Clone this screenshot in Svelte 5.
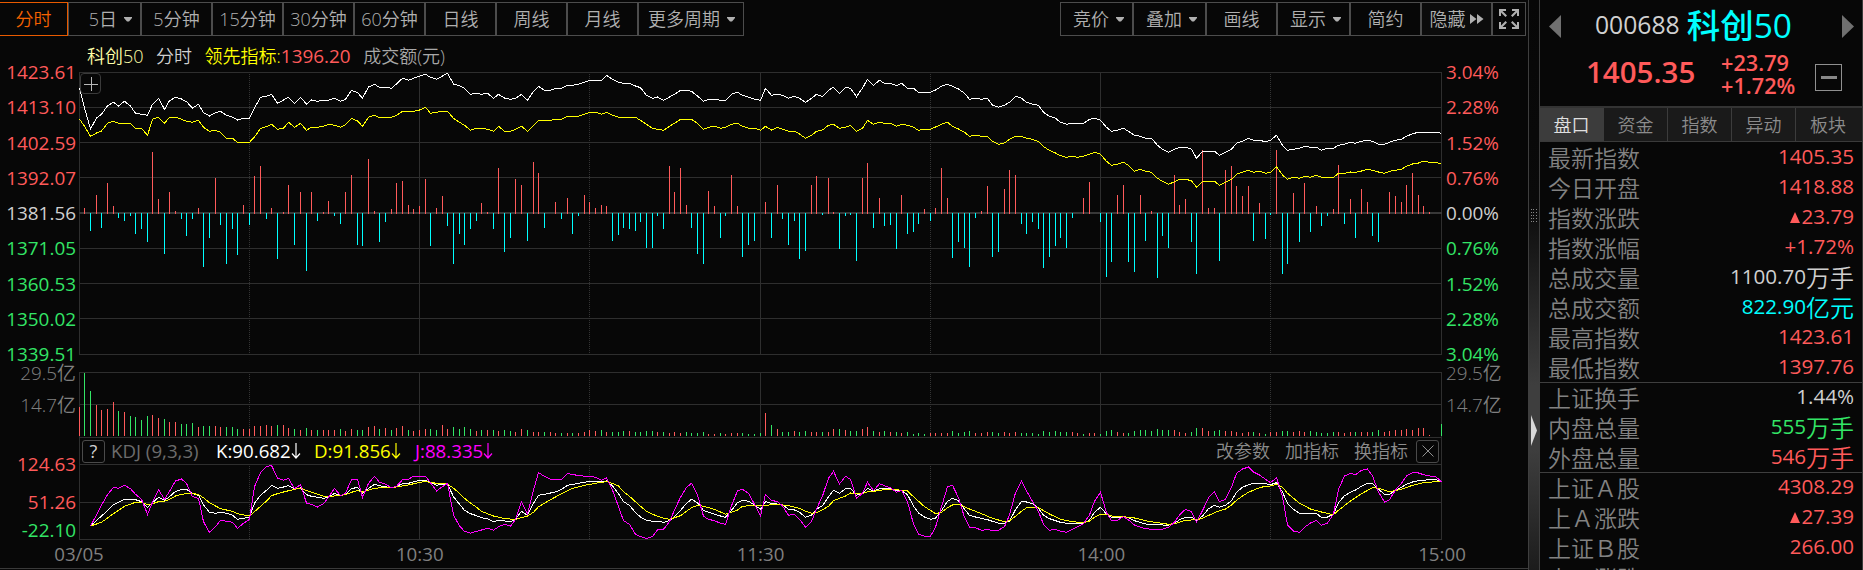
<script lang="ts">
  type Tool = { label: string; width: number; caret?: boolean; active?: boolean; icon?: string };
  type Row = { label: string; num: string; unit?: string; tone: string; up?: boolean; last?: boolean };

  const periods: Tool[] = [
    { label: "分时", width: 68, active: true },
    { label: "5日", width: 73, caret: true },
    { label: "5分钟", width: 71 },
    { label: "15分钟", width: 71 },
    { label: "30分钟", width: 71 },
    { label: "60分钟", width: 71 },
    { label: "日线", width: 71 },
    { label: "周线", width: 71 },
    { label: "月线", width: 71 },
    { label: "更多周期", width: 106, caret: true }
  ];

  const tools: Tool[] = [
    { label: "竞价", width: 73, caret: true },
    { label: "叠加", width: 73, caret: true },
    { label: "画线", width: 71 },
    { label: "显示", width: 73, caret: true },
    { label: "简约", width: 71 },
    { label: "隐藏", width: 71, icon: "forward" },
    { label: "", width: 34, icon: "expand" }
  ];

  const prices = ["1423.61", "1413.10", "1402.59", "1392.07", "1381.56", "1371.05", "1360.53", "1350.02", "1339.51"];
  const percents = ["3.04%", "2.28%", "1.52%", "0.76%", "0.00%", "0.76%", "1.52%", "2.28%", "3.04%"];
  const times = ["03/05", "10:30", "11:30", "14:00", "15:00"];
  const tabs = ["盘口", "资金", "指数", "异动", "板块"];

  const rows: Row[] = [
    { label: "最新指数", num: "1405.35", tone: "red" },
    { label: "今日开盘", num: "1418.88", tone: "red" },
    { label: "指数涨跌", num: "23.79", tone: "red", up: true },
    { label: "指数涨幅", num: "+1.72%", tone: "red" },
    { label: "总成交量", num: "1100.70", unit: "万手", tone: "light" },
    { label: "总成交额", num: "822.90", unit: "亿元", tone: "cyan" },
    { label: "最高指数", num: "1423.61", tone: "red" },
    { label: "最低指数", num: "1397.76", tone: "red", last: true },
    { label: "上证换手", num: "1.44%", tone: "light" },
    { label: "内盘总量", num: "555", unit: "万手", tone: "green" },
    { label: "外盘总量", num: "546", unit: "万手", tone: "red", last: true },
    { label: "上证Ａ股", num: "4308.29", tone: "red" },
    { label: "上Ａ涨跌", num: "27.39", tone: "red", up: true },
    { label: "上证Ｂ股", num: "266.00", tone: "red" },
    { label: "上Ｂ涨跌", num: "0.00", tone: "red" }
  ];

  // one sample per trading minute, levels in thirds of a pixel
  const price = [
    264, 324, 387, 354, 343, 317, 307, 318, 304, 318, 340, 343, 346, 313, 295, 328, 302, 292, 297, 305,
    324, 313, 338, 348, 338, 334, 346, 352, 360, 355, 355, 324, 292, 289, 283, 310, 300, 292, 310, 292,
    312, 300, 304, 301, 301, 295, 304, 298, 271, 278, 294, 261, 253, 262, 262, 265, 252, 235, 241, 235,
    229, 223, 232, 238, 228, 220, 252, 257, 265, 283, 280, 283, 280, 295, 283, 294, 298, 295, 283, 301,
    274, 259, 271, 271, 265, 265, 256, 256, 253, 247, 241, 241, 241, 226, 238, 247, 250, 250, 258, 263,
    286, 295, 291, 301, 291, 283, 271, 271, 274, 288, 304, 298, 298, 301, 301, 283, 277, 286, 292, 298,
    301, 265, 286, 283, 286, 295, 289, 295, 307, 295, 283, 290, 271, 262, 280, 262, 265, 290, 264, 238,
    256, 241, 250, 250, 257, 250, 265, 265, 277, 277, 277, 270, 259, 253, 259, 267, 280, 298, 295, 298,
    295, 316, 322, 316, 307, 289, 295, 307, 313, 316, 337, 349, 355, 367, 373, 370, 370, 370, 358, 355,
    361, 382, 394, 391, 385, 394, 406, 409, 415, 415, 436, 448, 457, 448, 442, 442, 448, 475, 454, 454,
    454, 466, 457, 448, 430, 424, 415, 421, 421, 425, 421, 406, 436, 451, 448, 445, 439, 442, 442, 451,
    445, 445, 436, 433, 427, 430, 424, 421, 424, 433, 433, 427, 421, 418, 409, 401, 397, 397, 397, 397, 400
  ];

  const leading = [
    357, 379, 409, 399, 393, 370, 364, 370, 370, 370, 385, 385, 406, 358, 352, 370, 352, 352, 358, 364,
    367, 361, 382, 394, 391, 397, 415, 415, 427, 427, 427, 411, 385, 380, 373, 388, 385, 367, 382, 370,
    391, 382, 382, 379, 373, 376, 382, 374, 355, 363, 379, 352, 346, 354, 352, 352, 346, 334, 334, 334,
    330, 322, 340, 337, 334, 334, 355, 367, 376, 391, 385, 385, 388, 394, 379, 394, 394, 388, 379, 394,
    376, 361, 361, 361, 358, 358, 349, 349, 349, 343, 337, 337, 343, 337, 346, 352, 352, 352, 352, 361,
    373, 385, 388, 391, 379, 370, 358, 358, 358, 370, 388, 382, 379, 385, 382, 373, 370, 379, 385, 385,
    391, 379, 390, 382, 388, 394, 394, 402, 415, 406, 394, 390, 376, 373, 385, 382, 376, 394, 385, 361,
    373, 367, 370, 370, 379, 373, 376, 382, 391, 388, 388, 381, 373, 367, 379, 387, 397, 409, 406, 409,
    409, 424, 433, 429, 418, 409, 409, 415, 418, 425, 440, 451, 459, 467, 472, 469, 472, 469, 463, 457,
    463, 484, 496, 493, 487, 496, 514, 508, 514, 517, 535, 544, 553, 545, 538, 538, 542, 562, 544, 544,
    544, 556, 547, 538, 523, 517, 511, 517, 514, 520, 517, 500, 525, 538, 532, 535, 529, 532, 526, 532,
    532, 532, 520, 520, 516, 517, 513, 508, 511, 516, 520, 514, 511, 508, 499, 492, 489, 484, 487, 487, 493
  ];

  // bar lengths in pixels, negative values hang below the zero line
  const momentum = [
    0, 5, -18, 18, -15, 30, 7, -5, -8, -3, -21, -16, -29, 61, 14, -41, 21, 2, -6, -23,
    -6, 5, -54, -25, 35, -12, -51, -16, -42, 8, -12, 37, 47, -6, 5, -46, 1, 28, -32, 21,
    -58, 21, -8, 1, 12, -3, -11, 21, 38, -32, -33, 54, 2, -29, -9, 4, 30, 32, 8, 4,
    7, 34, -33, 5, 17, -13, -51, -21, -32, -16, -8, 10, 1, -16, 45, -39, -25, 34, 28, -28,
    51, 40, -15, 0, 11, -6, 15, -21, -3, 18, 11, 5, 8, 7, -28, -22, -15, -16, -18, -9,
    -35, -35, -3, -16, 47, 21, 45, 8, -15, -41, -51, 22, 7, -25, -3, 38, 7, -44, -32, -28,
    0, 11, -25, 28, -6, -32, -8, -46, -38, 28, 37, -2, 35, 1, -36, -3, -2, -48, 35, 50,
    -15, 15, -13, -12, -36, 18, -21, -19, -11, 4, -8, 5, 45, 15, -45, -29, -35, -54, -5, 2,
    27, -44, -39, 24, 43, 38, -11, -21, -9, -16, -55, -44, -33, -25, -35, -5, 0, 15, 31, 0,
    -9, -64, -49, 18, 28, -49, -59, 18, -28, 2, -65, -23, -35, 38, 8, 14, -29, -61, 63, 5,
    5, -48, 43, 47, 27, 17, 27, -28, 10, -26, -2, 63, -61, -51, 20, -29, 30, -19, 7, -13,
    -3, 4, 48, -11, 14, -25, 24, 11, -23, -29, 0, 21, 17, 11, 28, 40, 18, 7, 1, 0, 0
  ];

  // turnover in thirds of a pixel, the sign only picks the colour
  const turnover = [
    87, -189, -135, 93, 78, 81, 102, -75, 72, -60, -57, -48, -60, 63, 54, -51, 42, 42, -36, -36,
    -39, 27, -30, -30, 30, 27, -27, -27, -21, 21, 21, 30, 30, 33, 30, -33, 33, 24, -21, 18,
    -24, 18, -18, 18, 18, 18, -21, 15, 21, -18, -18, 27, 30, -21, 24, -18, 24, 30, -18, 15,
    18, 21, -21, -18, 33, 21, -27, -21, -27, -21, 15, -18, 18, -18, 15, -18, -15, 12, 21, -18,
    12, 12, -12, 12, 9, -9, 9, -9, 9, 12, 18, 15, -18, 12, -12, -12, -15, 15, -12, -12,
    -15, -15, 12, -12, 9, 12, 9, -12, -9, -9, -12, 6, 6, -9, 6, 9, 9, -9, -6, -6,
    -9, 69, -33, 21, -12, -12, 15, -12, -15, 12, 12, -12, 12, 21, -21, 18, -15, -15, 21, 27,
    -15, 12, -15, 12, -12, 9, -12, -6, -9, -6, 9, 9, 9, 9, -15, -9, -12, -15, 9, 9,
    12, -12, -9, 12, 9, 12, -9, -9, -9, -6, -15, -12, -15, -12, -12, 12, 9, -6, 9, 9,
    -6, -15, -18, 12, 9, -9, -15, -18, -18, -15, -21, -18, -18, 18, 12, 9, -12, -24, 24, 15,
    -15, -18, 15, 15, 12, 9, 12, -12, 9, -6, 12, 12, -15, -15, 12, 15, 12, -15, -12, -9,
    -9, -12, 12, 9, 12, -12, 12, 12, -12, -18, 12, 15, 18, 18, 21, 18, 24, 24, 3, 0, -36
  ];

  const kLine =
    "2,558 4,528 5,512 6,494 8,478 10,479 11,485 12,503 13,488 14,472 15,481 16,470 17,454 18,449 19,448 20,461 21,466 22,495 23,517 24,520 25,517 26,520 27,526 28,538 29,535 30,531 31,490 32,466 33,451 34,436 35,445 36,441 37,437 38,447 39,444 40,464 41,469 43,475 44,472 45,460 46,467 47,463 48,446 49,442 50,461 51,445 52,433 53,437 55,443 56,439 57,431 58,430 60,421 61,422 62,427 63,436 64,433 65,432 66,470 67,493 68,511 69,521 70,527 71,533 72,536 73,545 74,541 76,545 77,538 78,514 79,526 80,490 81,466 82,463 83,459 84,456 85,448 86,436 88,430 90,424 92,425 93,423 94,437 95,461 96,485 97,496 98,518 99,531 100,541 101,544 102,544 103,547 104,542 105,530 106,511 107,490 108,478 109,488 110,511 111,517 112,523 113,528 114,532 115,511 116,488 117,481 118,484 119,495 120,508 121,485 122,490 124,494 125,508 126,510 127,517 128,532 129,526 130,508 131,497 132,470 133,451 134,460 135,446 136,445 137,466 138,460 139,445 140,453 141,446 143,446 144,452 145,452 146,464 147,498 148,519 149,531 150,538 151,534 152,512 153,484 154,475 155,482 156,508 157,526 158,531 160,539 161,544 162,550 163,550 164,543 165,509 166,484 167,486 168,491 169,505 170,526 171,536 172,542 173,547 174,550 177,550 178,540 179,517 180,502 181,522 182,532 183,533 184,530 185,533 186,542 188,552 190,554 192,556 193,550 194,539 195,532 196,532 197,541 198,528 199,506 200,496 201,502 202,496 203,482 204,457 205,442 206,434 207,430 209,431 210,434 211,428 212,456 213,490 214,508 215,520 218,520 219,533 220,531 221,522 222,488 223,467 224,457 225,450 226,439 227,430 228,431 229,448 230,463 231,463 232,452 233,442 234,433 235,426 236,422 238,419 239,418 240,426";

  const dLine =
    "2,558 4,547 6,521 8,499 10,487 11,487 12,494 13,491 14,485 15,484 16,478 17,468 18,463 19,461 20,460 21,464 22,473 23,488 25,506 27,514 28,521 30,528 31,515 33,483 34,467 35,461 36,456 38,448 39,445 41,457 43,469 45,468 47,464 48,457 49,452 50,456 52,445 54,442 56,441 58,435 60,427 61,425 63,430 65,432 66,445 67,460 68,475 69,489 70,502 71,514 73,528 75,536 77,538 78,533 79,528 80,517 81,500 83,479 85,461 87,445 89,436 91,430 93,425 94,430 95,438 96,455 97,469 99,499 100,514 101,523 103,535 104,538 106,527 108,503 109,496 110,499 112,508 114,523 116,510 117,499 119,496 121,496 123,493 125,497 127,505 128,514 129,520 130,518 131,509 132,499 133,482 135,468 136,459 138,461 139,455 140,454 142,449 144,449 146,453 147,470 149,500 150,511 151,521 152,517 153,503 154,495 155,493 156,500 157,507 159,521 161,535 163,545 164,542 165,529 166,514 167,503 169,503 171,522 173,538 175,545 177,548 178,543 179,532 180,523 181,523 182,528 184,530 186,534 188,542 190,548 192,553 193,551 195,541 197,539 198,535 200,518 201,512 202,507 203,495 204,481 205,468 206,457 208,443 209,439 210,438 211,433 212,442 213,460 215,490 217,507 219,516 221,524 222,511 224,483 226,461 228,443 229,445 231,455 233,448 235,436 237,428 239,425 240,425";

  const jSamples = [
    558, 525, 495, 464, 442, 445, 436, 446, 463, 478, 523, 487, 449, 478, 454, 423, 417, 430, 470, 475,
    545, 577, 560, 541, 544, 547, 565, 550, 538, 440, 398, 380, 376, 415, 421, 415, 446, 434, 489, 493,
    501, 491, 472, 445, 467, 460, 419, 418, 472, 430, 409, 427, 433, 443, 439, 419, 418, 409, 409, 409,
    428, 453, 440, 430, 525, 558, 574, 580, 574, 570, 565, 571, 560, 553, 559, 538, 485, 523, 450, 398,
    409, 418, 418, 418, 400, 404, 406, 409, 409, 412, 421, 413, 450, 500, 542, 553, 583, 590, 595, 590,
    569, 568, 545, 510, 472, 442, 430, 465, 529, 538, 542, 550, 553, 497, 452, 448, 460, 493, 528, 463,
    481, 485, 498, 526, 523, 538, 562, 545, 507, 468, 415, 394, 432, 409, 418, 475, 460, 427, 452, 431,
    437, 443, 457, 451, 485, 552, 583, 589, 589, 562, 500, 440, 436, 473, 532, 562, 563, 571, 569, 571,
    571, 560, 525, 458, 424, 453, 484, 515, 553, 571, 568, 574, 577, 568, 560, 551, 525, 484, 457, 518,
    542, 541, 530, 540, 555, 562, 566, 568, 568, 568, 562, 547, 525, 508, 515, 545, 512, 473, 455, 485,
    478, 442, 400, 387, 381, 396, 405, 418, 428, 413, 470, 555, 573, 577, 562, 549, 541, 556, 549, 522,
    448, 408, 400, 404, 391, 387, 408, 456, 486, 479, 450, 430, 408, 398, 399, 404, 408, 409, 426
  ];

  const minuteX = (i: number) => Math.floor(i * 5.675 + 0.001);

  function linePoints(pairs: number[][], top: number): string {
    return pairs.map(([i, v]) => `${minuteX(i) + 0.5},${(v / 3 - top).toFixed(1)}`).join(" ");
  }

  const indexed = (values: number[], start = 0) => values.map((v, n) => [n + start, v]);
  const parsed = (text: string) => text.split(" ").map((p) => p.split(",").map(Number));

  const gridX = [0, 340, 681, 1021, 1362];
  const dottedX = [170, 510, 851, 1191];
</script>

{#snippet verticals(height: number)}
  {#each gridX as x}
    <rect class="grid" {x} y="0" width="1" {height} />
  {/each}
  {#each dottedX as x}
    <line class="dotted" x1={x + 0.5} x2={x + 0.5} y1="2" y2={height} />
  {/each}
{/snippet}

{#snippet downArrow()}
  <svg class="down" width="10" height="18" viewBox="0 0 10 18">
    <path d="M5 1V16M1 11.5L5 16L9 11.5" />
  </svg>
{/snippet}

{#snippet toolButton(tool: Tool)}
  <button
    class="tool"
    class:active={tool.active}
    class:with-caret={tool.caret}
    style:width="{tool.width}px"
  >
    {tool.label}
    {#if tool.caret}
      <svg width="8" height="5" viewBox="0 0 8 5"><path d="M0 0H8V1L5 4.5H3L0 1Z" /></svg>
    {:else if tool.icon === "forward"}
      <svg class="forward" width="14" height="10" viewBox="0 0 14 10"><path d="M0 0L6.5 5L0 10ZM7 0L13.5 5L7 10Z" /></svg>
    {:else if tool.icon === "expand"}
      <svg width="20" height="20" viewBox="0 0 20 20">
        <path d="M0 0H7V2H3.5L8 6.5L6.5 8L2 3.5V7H0ZM20 0H13V2H16.5L12 6.5L13.5 8L18 3.5V7H20ZM0 20H7V18H3.5L8 13.5L6.5 12L2 16.5V13H0ZM20 20H13V18H16.5L12 13.5L13.5 12L18 16.5V13H20Z" />
      </svg>
    {/if}
  </button>
{/snippet}

<div class="app">
  <main class="chart">
    <div class="toolbar">
      <div class="tool-group">
        {#each periods as tool}
          {@render toolButton(tool)}
        {/each}
      </div>
      <div class="tool-group">
        {#each tools as tool}
          {@render toolButton(tool)}
        {/each}
      </div>
    </div>

    <div class="legend">
      <span class="pale">科创50</span>
      <span class="light">分时</span>
      <span><span class="yellow">领先指标:</span><span class="red digits">1396.20</span></span>
      <span class="muted">成交额(元)</span>
    </div>

    <div class="panels">
      <div class="axis left">
        <div class="scale main-scale">
          {#each prices as label, i}
            <span class:red={i < 4} class:light={i === 4} class:green={i > 4}>{label}</span>
          {/each}
        </div>
        <div class="scale volume-scale"><span>29.5亿</span><span>14.7亿</span></div>
        <div class="scale kdj-scale">
          <span class="red">124.63</span><span class="red">51.26</span><span class="green lowest">-22.10</span>
        </div>
      </div>

      <div class="plots">
        <div class="main-plot">
          <svg width="1363" height="283" shape-rendering="crispEdges">
            {#each [0, 35, 70, 105, 176, 211, 246, 282] as y}
              <rect class="grid" x="0" {y} width="1363" height="1" />
            {/each}
            {@render verticals(283)}
            <rect class="zero" x="0" y="140" width="1363" height="2" />
            {#each momentum as v, i}
              {#if v > 0}
                <rect class="up" x={minuteX(i)} y={141 - v} width="1" height={v + 1} />
              {:else if v < 0}
                <rect class="down-bar" x={minuteX(i)} y="141" width="1" height={-v} />
              {/if}
            {/each}
            <polyline class="white-line" points={linePoints(indexed(price), 72)} />
            <polyline class="yellow-line" points={linePoints(indexed(leading), 72)} />
          </svg>
          <button class="add" aria-label="add">
            <svg width="14" height="14" shape-rendering="crispEdges"><path d="M7.5 0V14M0 7.5H14" /></svg>
          </button>
        </div>

        <svg class="volume-plot" width="1363" height="66" shape-rendering="crispEdges">
          <rect class="grid" x="0" y="0" width="1363" height="1" />
          <rect class="grid" x="0" y="32" width="1363" height="1" />
          <rect class="grid" x="0" y="65" width="1363" height="1" />
          {@render verticals(65)}
          {#each turnover as v, i}
            <rect
              class={v > 0 ? "up" : "fall"}
              x={minuteX(i)}
              y={64 - Math.abs(v) / 3}
              width="1"
              height={Math.abs(v) / 3}
            />
          {/each}
        </svg>

        <div class="kdj-head">
          <button class="square">?</button>
          <span class="kdj-name">KDJ (9,3,3)</span>
          <span class="k">K:90.682{@render downArrow()}</span>
          <span class="d">D:91.856{@render downArrow()}</span>
          <span class="j">J:88.335{@render downArrow()}</span>
          <div class="kdj-links">
            <span>改参数</span>
            <span>加指标</span>
            <span>换指标</span>
          </div>
          <button class="square" aria-label="close">
            <svg width="12" height="12"><path d="M0.5 0.5L11.5 11.5M11.5 0.5L0.5 11.5" /></svg>
          </button>
        </div>

        <svg width="1363" height="76" shape-rendering="crispEdges">
          <rect class="grid" x="0" y="0" width="1363" height="1" />
          <rect class="grid" x="0" y="38" width="1363" height="1" />
          <rect class="grid" x="0" y="75" width="1363" height="1" />
          {@render verticals(76)}
          <polyline class="white-line" points={linePoints(parsed(kLine), 124)} />
          <polyline class="yellow-line" points={linePoints(parsed(dLine), 124)} />
          <polyline class="magenta-line" points={linePoints(indexed(jSamples, 2), 124)} />
        </svg>

        <div class="times">
          {#each times as time}
            <span>{time}</span>
          {/each}
        </div>
      </div>

      <div class="axis right">
        <div class="scale main-scale">
          {#each percents as label, i}
            <span class:red={i < 4} class:light={i === 4} class:green={i > 4}>{label}</span>
          {/each}
        </div>
        <div class="scale volume-scale"><span>29.5亿</span><span>14.7亿</span></div>
      </div>
    </div>
  </main>

  <div class="splitter">
    <svg class="grip" width="6" height="13" shape-rendering="crispEdges">
      {#each [0, 3, 6, 9, 12] as y}
        {#each [0, 2, 5] as x}
          <rect {x} {y} width="1" height="1" />
        {/each}
      {/each}
    </svg>
    <svg class="handle" width="6" height="31"><path d="M0 0L6 15.5L0 31Z" /></svg>
  </div>

  <aside class="quote">
    <header>
      <div class="title">
        <svg width="12" height="23"><path d="M12 0V23L0 11.5Z" /></svg>
        <div class="names">
          <span class="code">000688</span>
          <span class="name">科创50</span>
        </div>
        <svg width="12" height="23"><path d="M0 0V23L12 11.5Z" /></svg>
      </div>
      <div class="latest">
        <span class="last-price">1405.35</span>
        <div class="change"><span>+23.79</span><span>+1.72%</span></div>
        <button class="minus" aria-label="collapse"><i></i></button>
      </div>
    </header>

    <nav>
      {#each tabs as tab, i}
        <button class:selected={i === 0}>{tab}</button>
      {/each}
    </nav>

    <div class="rows">
      {#each rows as row}
        <div class="row" class:last={row.last}>
          <span class="label">{row.label}</span>
          <span class="value {row.tone}">
            {#if row.up}<svg width="10" height="11"><path d="M5 0L10 11H0Z" /></svg>{/if}
            <span class="num">{row.num}</span>
            {#if row.unit}<span class="unit">{row.unit}</span>{/if}
          </span>
        </div>
      {/each}
    </div>
  </aside>
</div>

<style>
  :global(body) {
    margin: 0;
    background: #070707;
  }

  .app {
    display: flex;
    width: 1863px;
    height: 570px;
    overflow: hidden;
    background: #070707;
    color: #808080;
    font-family: "Open Sans", "Noto Sans CJK SC", sans-serif;
    font-size: 18px;
    font-weight: 350;
    line-height: 24px;
    white-space: nowrap;
  }

  .app :global(svg) {
    display: block;
    flex-shrink: 0;
  }

  button {
    box-sizing: border-box;
    margin: 0;
    padding: 0;
    background: none;
    font: inherit;
    color: inherit;
  }

  .red { color: #ff5a5a; }
  .green { color: #33e566; }
  .light { color: #d0d0d0; }
  .cyan { color: #00ffff; }
  .pale { color: #ffffa8; }
  .yellow { color: #ffff00; }
  .muted { color: #a8a8a8; }

  .chart {
    box-sizing: border-box;
    width: 1528px;
    height: 569px;
    padding-top: 2px;
    border-bottom: 1px solid #3a3a3a;
  }

  .toolbar {
    display: flex;
    justify-content: space-between;
    height: 34px;
    padding-right: 2px;
  }

  .tool-group {
    display: flex;
  }

  .tool {
    display: flex;
    align-items: center;
    justify-content: center;
    gap: 7px;
    height: 34px;
    border: 1px solid #4c4c4c;
    color: #b0b0b0;
    fill: #b0b0b0;
  }

  .tool.active {
    border-color: #e85a00;
    border-left: 0;
    color: #f56200;
  }

  .with-caret {
    justify-content: flex-end;
    padding-right: 8px;
  }

  .tool:has(.forward) {
    gap: 4px;
    background: #0c0c0c;
  }

  .legend {
    box-sizing: border-box;
    display: flex;
    align-items: center;
    gap: 12.5px;
    height: 36px;
    padding: 3px 0 0 87px;
    line-height: 36px;
  }

  .digits {
    font-size: 18.9px;
    font-weight: 400;
  }

  .panels {
    display: flex;
    height: 496px;
  }

  .axis {
    box-sizing: border-box;
    width: 79px;
    font-size: 18.9px;
    font-weight: 400;
  }

  .axis.left {
    padding-right: 3px;
    text-align: right;
  }

  .axis.right {
    padding-left: 4px;
  }

  .scale {
    display: flex;
    flex-direction: column;
    justify-content: space-between;
  }

  .scale span {
    height: 0;
    line-height: 0;
  }

  .main-scale {
    height: 282px;
  }

  .volume-scale {
    height: 32px;
    margin-top: 19px;
    font-weight: 350;
  }

  .kdj-scale {
    height: 66px;
    margin-top: 59px;
  }

  .lowest {
    margin-top: -10px;
  }

  .plots {
    width: 1363px;
  }

  .main-plot {
    position: relative;
    height: 283px;
  }

  .add {
    position: absolute;
    top: 1px;
    left: 1px;
    display: grid;
    place-items: center;
    width: 21px;
    height: 21px;
    border: 1px solid #3a3a3a;
    border-radius: 4px;
  }

  .add path {
    stroke: #b8b8b8;
  }

  .grid { fill: #2e2e2e; }
  .zero { fill: #383838; }
  .up { fill: #ff5a5a; }
  .down-bar { fill: #00ffff; }
  .fall { fill: #33e566; }

  .dotted {
    stroke: #333;
    stroke-dasharray: 1 1;
  }

  polyline {
    fill: none;
    stroke-width: 1;
  }

  .white-line { stroke: #fff; }
  .yellow-line { stroke: #ff0; }
  .magenta-line { stroke: #f0f; }

  .volume-plot {
    margin-top: 17px;
  }

  .kdj-head {
    box-sizing: border-box;
    display: flex;
    align-items: center;
    height: 26px;
    padding: 0 2px;
    border: solid #2e2e2e;
    border-width: 0 1px;
  }

  .square {
    display: grid;
    place-items: center;
    width: 23px;
    height: 23px;
    border: 1px solid #4a4a4a;
    border-radius: 3px;
    color: #d0d0d0;
    font-weight: 400;
    line-height: 20px;
  }

  .square path {
    stroke: #909090;
  }

  .kdj-name {
    width: 105px;
    margin-left: 6px;
    color: #6c6c6c;
    font-size: 18.7px;
    font-weight: 400;
  }

  .k,
  .d,
  .j {
    display: flex;
    align-items: center;
    width: 98px;
    font-size: 18.7px;
    font-weight: 400;
  }

  .k { color: #fff; }
  .d { width: 101px; color: #ff0; }
  .j { color: #f0f; }

  .down path {
    fill: none;
    stroke: currentColor;
    stroke-width: 1.2;
  }

  .kdj-links {
    display: flex;
    gap: 15px;
    margin-left: auto;
    padding-right: 8px;
    color: #8c8c8c;
  }

  .times {
    display: flex;
    justify-content: space-between;
    height: 28px;
    font-size: 18.7px;
    font-weight: 400;
    line-height: 28px;
  }

  .times span {
    display: flex;
    justify-content: center;
    width: 0;
  }

  .splitter {
    box-sizing: border-box;
    display: flex;
    flex-direction: column;
    width: 12px;
    padding-left: 2px;
    border: solid #3e3e3e;
    border-width: 0 1px;
    background: linear-gradient(#070707 0, #0a0a0a 200px, #3e3e3e 385px, #3e3e3e 450px, #1c1c1c 570px);
  }

  .grip {
    margin-top: 209px;
    fill: #888;
  }

  .handle {
    margin-top: 193px;
    fill: #d8d8d8;
  }

  .quote {
    box-sizing: border-box;
    width: 323px;
    border-right: 1px solid #3a3a3a;
  }

  header {
    box-sizing: border-box;
    height: 106px;
  }

  .title {
    display: flex;
    align-items: center;
    height: 52px;
    padding: 0 8px 0 9px;
    fill: #707070;
  }

  .names {
    display: flex;
    align-items: center;
    gap: 7px;
    margin: 0 auto 2px 34px;
  }

  .code {
    color: #d0d0d0;
    font-size: 24.7px;
    font-weight: 400;
  }

  .name {
    color: #00ffff;
    font-size: 33.5px;
    font-weight: 500;
  }

  .latest {
    display: flex;
    align-items: center;
    height: 44px;
    color: #ff5a5a;
    font-weight: 600;
  }

  .last-price {
    width: 110px;
    padding: 0 0 4px 46px;
    font-size: 29.5px;
  }

  .change {
    display: flex;
    flex-direction: column;
    width: 92px;
    margin-left: 25px;
    font-size: 21.7px;
    line-height: 23px;
  }

  .minus {
    display: grid;
    place-items: center;
    width: 27px;
    height: 27px;
    margin: 6px 0 0 2px;
    border: 1px solid #909090;
  }

  .minus i {
    width: 16px;
    height: 3px;
    background: #888;
  }

  nav {
    display: flex;
    height: 36px;
    box-sizing: border-box;
    border-top: 2px solid #333;
    border-bottom: 1px solid #3a3a3a;
  }

  nav button {
    width: 64px;
    border: 0;
    border-right: 1px solid #3c3c3c;
    background: #1a1a1a;
    color: #8c8c8c;
  }

  nav button:last-child {
    width: 66px;
    padding-right: 2px;
    border-right: 0;
  }

  nav .selected {
    background: #3c3c3c;
    color: #e0e0e0;
  }

  .row {
    box-sizing: border-box;
    display: flex;
    align-items: center;
    justify-content: space-between;
    height: 30px;
    padding: 0 8px;
    border-bottom: 1px solid transparent;
  }

  .rows {
    padding-top: 1px;
  }

  .row.last {
    border-bottom-color: #3e3e3e;
  }

  .label {
    color: #828282;
    font-size: 23px;
  }

  .value {
    display: flex;
    align-items: center;
    fill: currentColor;
  }

  .num {
    padding-bottom: 3px;
    font-size: 20.6px;
    font-weight: 400;
  }

  .unit {
    font-size: 24px;
  }

  .value svg {
    margin-right: 1px;
  }
</style>
